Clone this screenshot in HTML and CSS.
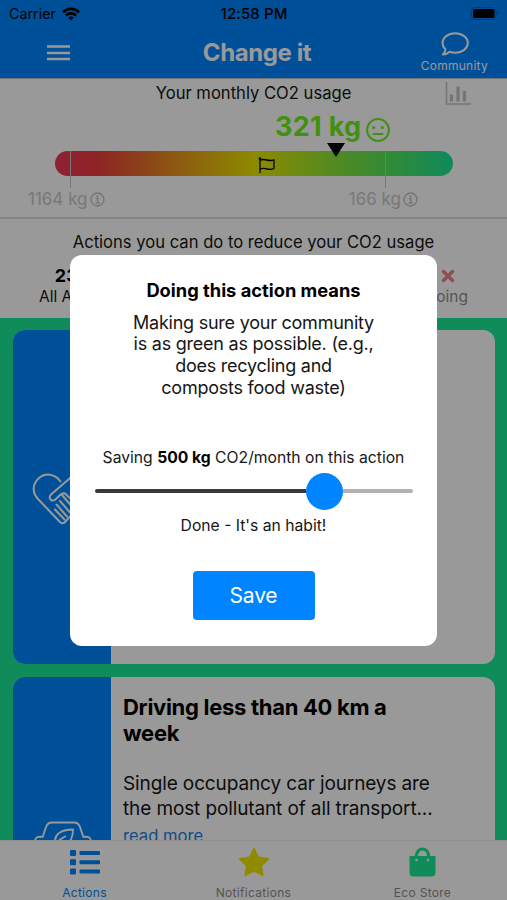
FILE: index.html
```html
<!DOCTYPE html>
<html lang="en">
<head>
<meta charset="utf-8">
<title>Change it</title>
<link rel="stylesheet" href="styles.css">
</head>
<body>
<div class="screen">
  <header class="header">
    <div class="status">
      <div class="carrier"><span>Carrier</span>
        <svg width="18" height="14" viewBox="0 0 18 14" fill="none" stroke="#000" stroke-width="2.6"><path d="M1 5.2a11.4 11.4 0 0 1 16 0"/><path d="M3.9 8.5a7.3 7.3 0 0 1 10.2 0"/><path d="M9 13.6 6.2 10.8a4 4 0 0 1 5.6 0z" fill="#000" stroke="none"/></svg>
      </div>
      <div class="time">12:58 PM</div>
      <svg class="battery" width="28" height="13" viewBox="0 0 28 13"><rect x=".5" y=".5" width="24.5" height="12" rx="3.5" fill="none" stroke="#000" stroke-opacity=".25"/><rect x="2" y="2" width="21.5" height="9" rx="2"/><path d="M26.2 4.3v4.4q1.4-.7 1.4-2.2t-1.4-2.2z" opacity=".3"/></svg>
    </div>
    <div class="nav">
      <svg class="menu" width="23" height="16" viewBox="0 0 23 16" stroke="#fff" stroke-width="2.4"><path d="M0 1.5h23M0 8h23M0 14h23"/></svg>
      <h1 class="title">Change it</h1>
      <div class="community">
        <svg width="28" height="24" viewBox="0 0 28 24" fill="none" stroke="#fff" stroke-width="2" stroke-linejoin="round"><path d="M14.2 1.3c7.2 0 12.6 4.3 12.6 9.7s-5.4 9.7-12.6 9.7c-2 0-3.9-.35-5.500-1-1.700 1.500-4 2.700-6.800 2.800 1.500-1.500 2.400-3.200 2.500-5.200C2.600 15.600 1.600 13.400 1.600 11c0-5.400 5.400-9.700 12.600-9.700z"/></svg>
        <span>Community</span>
      </div>
    </div>
  </header>

  <section class="usage">
    <div class="usage-title">Your monthly CO2 usage</div>
    <svg class="chart" width="26" height="24" viewBox="0 0 26 24" fill="none" stroke="#c4c4c4"><path d="M1.5 0v22H26" stroke-width="1.6"/><path d="M6.500 19.500v-7M13 19.500V4.500M19.500 19.500V9" stroke-width="3.2"/></svg>
    <div class="current"><span>321 kg</span>
      <svg width="24" height="24" viewBox="0 0 24 24" fill="none" stroke="#70f01c" stroke-width="2"><circle cx="12" cy="12" r="10.9"/><path d="M7.500 16h9" stroke-linecap="round"/><g fill="#70f01c" stroke="none"><circle cx="7.700" cy="9.500" r="1.600"/><circle cx="16.300" cy="9.500" r="1.600"/></g></svg>
    </div>
    <div class="bar">
      <svg class="flag" width="18" height="17" viewBox="0 0 18 17" fill="none" stroke="#000" stroke-width="1.3" stroke-linejoin="round"><path d="M2 1.500V16M2 3.200c2.500-1.200 4.500-.8 6.700-.2s4.600.9 7.300-.2v8.700c-2.700 1.100-5 1-7.300.3S4.300 11 2 12"/><circle cx="2" cy="1.500" r=".7"/></svg>
      <i class="tick tick-high"></i><i class="tick tick-low"></i><i class="pointer"></i>
    </div>
    <div class="range">
      <div class="limit"><span>1164 kg</span><svg width="15" height="15" viewBox="0 0 15 15" fill="none" stroke="#c4c4c4" stroke-width="1.4"><circle cx="7.500" cy="7.500" r="6.500"/><path d="M6 6.500h1.700V11M5.700 11h4"/><path d="M7.500 3.500v1.800" stroke-width="1.8"/></svg></div>
      <div class="limit"><span>166 kg</span><svg width="15" height="15" viewBox="0 0 15 15" fill="none" stroke="#c4c4c4" stroke-width="1.4"><circle cx="7.500" cy="7.500" r="6.500"/><path d="M6 6.500h1.700V11M5.700 11h4"/><path d="M7.500 3.500v1.800" stroke-width="1.8"/></svg></div>
    </div>
  </section>

  <section class="filters">
    <div class="filters-title">Actions you can do to reduce your CO2 usage</div>
    <div class="tabs">
      <div class="tab"><b>23</b><span>All Actions</span></div>
      <div class="tab tab-off"><svg width="14" height="14" viewBox="0 0 14 14" stroke="#f08088" stroke-width="3.4" stroke-linecap="round"><path d="m2.500 2.500 9 9m0-9-9 9"/></svg><span>Not doing</span></div>
    </div>
  </section>

  <main class="list">
    <article class="card card-first">
      <div class="side">
        <svg width="60" height="58" viewBox="0 0 60 58" fill="none" stroke="#fff" stroke-width="2" stroke-linejoin="round" stroke-linecap="round"><path d="M28.500 13.500C23 6 13.500 4.500 7.500 9.500c-7.500 6.500-7.500 15-1.500 21.500l22 23q2.500 2.500 5 0L54 31c6-6.500 6-15-1.500-21.500-5-4.500-11-3.500-15.500 1.500L19 26.500c-2 2-1.500 4.500 0 5.500 1.500.8 3.500.5 5-1l4.500-4.500q2.500-1.500 4.500-1l13 12"/><path d="m30 27 12 14M28 33l10 11.500M24.500 36.500l10.500 12M23 41.500l9.500 10"/></svg>
      </div>
      <div class="content"></div>
    </article>
    <article class="card">
      <div class="side">
        <svg width="60" height="46" viewBox="0 0 60 46" fill="none" stroke="#fff" stroke-width="1.9" stroke-linejoin="round"><path d="M10.500 16.500 14 6q1.500-4.500 6-4.500h22q4.500 0 6 4.500l3.500 10.500M10.500 16q-7-1.500-7.500 4h6M51.500 16q7-1.500 7.500 4h-6M9 20q-5 5-5 12v9h54v-9q0-7-5-12"/><path d="M24.500 23C20 14 29 8.500 41 8.500 41 18 36 28 24.500 23zM20 29c3-7 8-11 14-14"/></svg>
      </div>
      <div class="content">
        <h2>Driving less than 40 km a week</h2>
        <p>Single occupancy car journeys are<br>the most pollutant of all transport...</p>
        <a>read more</a>
      </div>
    </article>
  </main>

  <nav class="tabbar">
    <div class="item item-on"><svg width="30" height="25" viewBox="0 0 30 25" fill="#0084ff"><rect width="6" height="6" y="0" rx="1"/><rect width="6" height="6" y="9.3" rx="1"/><rect width="6" height="6" y="18.500" rx="1"/><rect x="9.500" y="1" width="20.500" height="4" rx="1"/><rect x="9.500" y="10.3" width="20.500" height="4" rx="1"/><rect x="9.500" y="19.500" width="20.500" height="4" rx="1"/></svg><span>Actions</span></div>
    <div class="item"><svg width="32" height="31" viewBox="0 0 32 31"><path d="m16 2 4.200 8.600 9.800 1.400-7 6.700 1.700 9.500-8.700-4.500-8.700 4.500L9 18.700 2 12l9.800-1.400z" fill="#eee800" stroke="#eee800" stroke-width="2" stroke-linejoin="round"/></svg><span>Notifications</span></div>
    <div class="item"><svg class="bag" width="27" height="30" viewBox="0 0 27 30"><path d="M7.500 11V8a6 6 0 0 1 12 0v3" fill="none" stroke="#1be996" stroke-width="3.2"/><path d="M.5 9h26v16.500q0 4-4 4h-18q-4 0-4-4z" fill="#1be996"/><g fill="#fff"><circle cx="7.600" cy="13" r="1.300"/><circle cx="19" cy="13" r="1.300"/></g></svg><span>Eco Store</span></div>
  </nav>

  <div class="overlay">
    <div class="modal">
      <h3>Doing this action means</h3>
      <p class="desc">Making sure your community<br>is as green as possible. (e.g.,<br>does recycling and<br>composts food waste)</p>
      <p class="saving">Saving <b>500 kg</b> CO2/month on this action</p>
      <div class="slider"><i class="done"></i><i class="knob"></i><i class="rest"></i></div>
      <p class="state">Done - It's an habit!</p>
      <button class="save">Save</button>
    </div>
  </div>
</div>
</body>
</html>
```
FILE: styles.css
```css
* { box-sizing: border-box; }
body, h1, h2, h3, p { margin: 0; }
body { font-family: Inter, "Liberation Sans", sans-serif; color: #161616; }
svg { display: block; flex: none; }
.screen { position: relative; width: 507px; height: 900px; overflow: hidden; display: flex; flex-direction: column; background: #fff; }

.header { height: 79px; background: #0084ff; border-bottom: 1px solid #b8c4d0; color: #fff; }
.status { height: 27px; display: grid; grid-template-columns: 1fr auto 1fr; align-items: center; padding: 0 8px 0 9px; color: #000; font-size: 14.3px; }
.carrier { display: flex; align-items: center; gap: 6px; }
.time { font-size: 15px; font-weight: 500; letter-spacing: .1px; }
.battery { justify-self: end; }
.nav { height: 51px; display: grid; grid-template-columns: 1fr auto 1fr; align-items: center; padding: 0 19px 0 26px; }
.menu { margin-left: 21px; }
.title { font-size: 24px; line-height: 50px; font-weight: 700; letter-spacing: -.4px; }
.community { justify-self: end; display: flex; flex-direction: column; align-items: center; gap: 2px; font-size: 12px; line-height: 15px; letter-spacing: .25px; }
.community svg { margin-left: 2px; }

.usage { position: relative; height: 140px; border-bottom: 2px solid #dcdcdc; }
.usage-title { text-align: center; font-size: 16.6px; line-height: 29px; height: 28px; }
.chart { position: absolute; left: 445px; top: 3px; }
.current { display: flex; align-items: center; gap: 5px; margin-left: 275px; height: 38px; font-size: 27px; font-weight: 700; letter-spacing: .3px; color: #70f01c; }
.current svg { margin-top: 7px; }
.bar { position: relative; width: 398px; height: 25px; margin: 6px 0 0 55px; border-radius: 13px; background: linear-gradient(90deg, #ef3858 0%, #ed393f 10%, #ea8a20 28%, #ebe600 50%, #83e63e 72%, #54e85c 84%, #18e69a 100%); }
.flag { position: absolute; left: 203px; top: 6px; }
.tick { position: absolute; top: 0; width: 1px; height: 37px; background: #c8c8c8; }
.tick-high { left: 15px; }
.tick-low { left: 330px; }
.pointer { position: absolute; left: 272px; top: -8px; border: solid transparent; border-width: 14px 9px 0; border-top-color: #000; }
.range { display: flex; justify-content: space-between; padding: 11px 89px 0 28px; color: #c8c8c8; font-size: 17px; line-height: 24px; }
.limit { display: flex; align-items: center; gap: 2px; }

.filters { height: 99px; }
.filters-title { text-align: center; font-size: 16.6px; line-height: 46px; height: 45px; }
.tabs { display: flex; justify-content: space-between; padding: 1px 39px 0; font-size: 15.5px; }
.tab { display: flex; flex-direction: column; align-items: center; line-height: 21px; }
.tab b { margin-right: 23px; font-size: 18px; line-height: 21px; color: #000; }
.tab svg { margin: 4px 0 3px 31px; }
.tab-off { color: #909090; }

.list { flex: 1; min-height: 0; overflow: hidden; padding: 12px 12px 0 13px; background: #1be996; }
.card { display: flex; width: 482px; height: 334px; margin-bottom: 13px; overflow: hidden; border-radius: 12px; background: #fff; }
.side { width: 98px; flex: none; display: flex; align-items: center; justify-content: center; background: #0084ff; }
.content { padding: 17px 12px; }
.content h2 { width: 300px; font-size: 22px; line-height: 26px; font-weight: 700; letter-spacing: -.3px; color: #000; }
.content p { margin-top: 26px; font-size: 19px; line-height: 24.5px; letter-spacing: -.12px; white-space: nowrap; }
.content a { display: block; margin-top: 3px; font-size: 16.6px; line-height: 24px; color: #2080e0; }

.tabbar { height: 60px; display: grid; grid-template-columns: repeat(3, 1fr); border-top: 1px solid #eee; background: #fff; }
.item { display: grid; grid-template-rows: 43px 18px; justify-items: center; align-items: center; font-size: 12px; line-height: 16px; letter-spacing: .3px; color: #8c8c8c; }
.item-on { color: #0084ff; }
.bag { margin-bottom: 2px; }

.overlay { position: absolute; inset: 0; display: flex; align-items: center; justify-content: center; background: rgba(0, 0, 0, .4); }
.modal { width: 367px; height: 391px; padding-top: 23px; border-radius: 12px; background: #fff; text-align: center; }
.modal h3 { font-size: 18.3px; line-height: 24px; color: #000; }
.desc { margin-top: 10px; font-size: 18px; line-height: 21.8px; letter-spacing: -.24px; }
.saving { margin-top: 47px; font-size: 15.7px; line-height: 24px; white-space: nowrap; }
.saving b { color: #000; }
.slider { display: flex; align-items: center; height: 37px; margin: 3px 24px 0 25px; }
.done, .rest { height: 4px; background: #3a3a3c; border-radius: 2px 0 0 2px; }
.done { width: 211px; }
.knob { width: 37px; height: 37px; border-radius: 50%; background: #0084ff; }
.rest { flex: 1; background: #b2b2b2; border-radius: 0 2px 2px 0; }
.state { margin-top: 4px; font-size: 15.7px; line-height: 24px; }
.save { display: block; width: 122px; height: 49px; margin: 33px auto 0; border: 0; border-radius: 4px; background: #0084ff; color: #fff; font: 400 21px Inter, sans-serif; letter-spacing: -.2px; }
```
